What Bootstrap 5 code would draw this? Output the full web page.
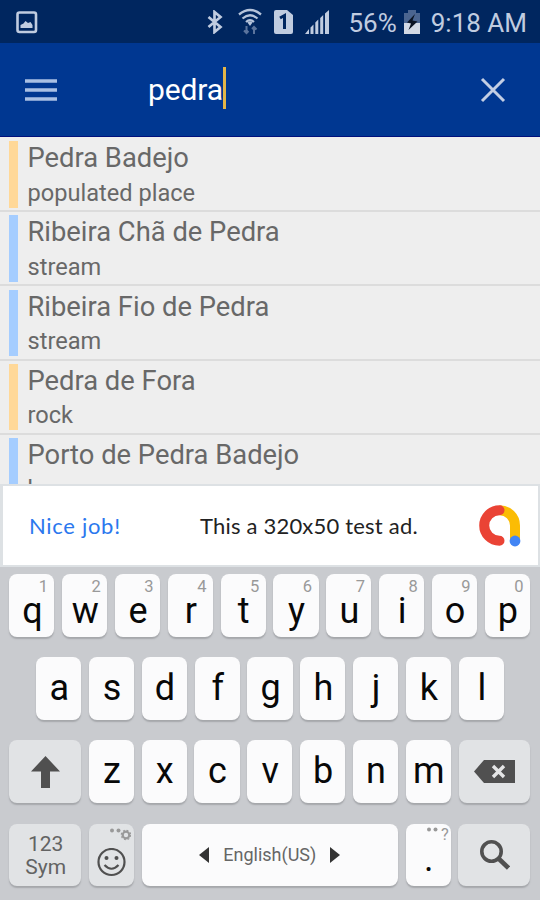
<!DOCTYPE html>
<html lang="en">
<head>
<meta charset="utf-8">
<meta name="viewport" content="width=device-width, initial-scale=1">
<title>Place search</title>
<link href="https://cdn.jsdelivr.net/npm/bootstrap@5.3.0/dist/css/bootstrap.min.css" rel="stylesheet">
<style>
  body { width: 540px; height: 900px; overflow: hidden; background: #eee; font-family: Roboto, "Liberation Sans", sans-serif; }
  svg { display: block; flex: none; }
  .status { height: 43px; background: #00265f; color: #c0cce0; font-size: 26px; padding: 3px 13px 0 16px; line-height: 40px; }
  .status svg { margin-top: -2px; }
  .searchbar { height: 94px; background: #003791; border-bottom: 1px solid #00107c; padding: 0 34px 0 25px; }
  .query { font-size: 30px; line-height: 42px; color: #fff; margin-left: 91px; padding-top: 1px; letter-spacing: -.1px; }
  .caret { width: 3px; height: 42px; background: #e3b548; margin-top: -3px; }
  .results { height: 347px; background: #eee; padding-top: 1px; }
  .place { height: 74.2px; padding: 3.3px 0 0 9.3px; border-bottom: 2px solid #dcdcdc; background: #eee; flex: none; }
  .place .stripe { width: 9px; height: 66.5px; margin-right: 9.2px; }
  .sand { background: #ffd898; }
  .sky { background: #a5cdff; }
  .place-name, .place-kind { line-height: 34.4px; color: #686868; white-space: nowrap; }
  .place-name { font-size: 27.35px; }
  .place-kind { font-size: 23.6px; }
  .ad { height: 83px; background: #fff; border: solid #dde1e4; border-width: 2px 2px 2px 3px; padding: 0 17.5px 0 26px; font-family: Lato, "Open Sans", sans-serif; font-size: 22px; letter-spacing: .2px; color: #222; }
  .ad-lead { color: #2b78ee; width: 171px; letter-spacing: .7px; }
  .keyboard { height: 333px; background: #c9cbcf; padding: 7px 9.3px 0; gap: 20.7px; }
  .keyrow { gap: 7.65px; height: 62.5px; }
  .key { width: 45.2px; height: 62.5px; border-radius: 8px; background: #fbfbfc; box-shadow: 0 2px 1.5px #a5a7ab; color: #080808; font-size: 36px; line-height: 62px; padding-left: 1px; text-align: center; position: relative; flex: none; }
  .key.low { line-height: 75px; }
  .key.wide { width: 71.8px; }
  .key.soft { background: #e1e3e5; color: #636363; }
  .key.space { width: 256.4px; color: #666; font-size: 18px; line-height: 62px; padding-left: 0; }
  .hint { position: absolute; right: 6.5px; top: 3px; font-size: 16.5px; line-height: 19px; color: #999; }
  .key.sym { font-size: 21px; line-height: 23px; padding-top: 9px; }
</style>
<script src="https://cdn.jsdelivr.net/npm/bootstrap@5.3.0/dist/js/bootstrap.bundle.min.js"></script>
</head>
<body class="d-flex flex-column">

<header class="status d-flex align-items-center flex-shrink-0">
  <svg width="22" height="23" viewBox="0 0 22 23"><rect x="1.5" y="1.5" width="18.5" height="19.5" rx="2" fill="none" stroke="#c0cce0" stroke-width="2.6"/><path d="M4.500 17v-3l3-1.500 2-2.500 2.500 2 2.500-1 2 3v3z" fill="#c0cce0"/></svg>
  <svg class="ms-auto" width="16" height="24" viewBox="0 0 16 24"><path d="M1.500 7l12 10-6 5V2l6 5-12 10" fill="none" stroke="#c0cce0" stroke-width="2.700"/></svg>
  <svg width="24" height="27" viewBox="0 0 24 27" style="margin:-4px 12px 0 15px"><g fill="none" stroke="#b6c4db" stroke-width="2.300"><path d="M1 6.500Q12-2.500 23 6.500M4.500 10.500Q12 4 19.500 10.500M8 14Q12 10.500 16 14"/></g><path d="M9.500 14.500Q12 12.500 14.500 14.500L12 18z" fill="#b6c4db"/><path d="M8.500 18v7m-2.500-2.500 2.500 2.500 2-2M16 26v-7m-2 2 2-2 2.500 2.500" fill="none" stroke="#5b749d" stroke-width="2"/></svg>
  <svg width="19" height="24" viewBox="0 0 19 24"><path d="M2 0h11l6 5v17q0 2-2 2H2q-2 0-2-2V2q0-2 2-2z" fill="#c0cce0"/><path d="M6 8l4.500-2.500V19" fill="none" stroke="#00265f" stroke-width="3"/></svg>
  <svg width="25" height="24" viewBox="0 0 25 24" style="margin:-2px 18px 0 12px"><path d="M0 24l4-5v5zM5.500 24v-6.500l3-3V24zM10.300 24V12.500l3-3V24zM15.200 24V8l3-3v19zM20 24V3.500L24 0v24z" fill="#c0cce0"/></svg>
  <span>56%</span>
  <svg width="16" height="24" viewBox="0 0 16 24" style="margin:-2px 11px 0 7px"><path d="M0 3h4V0h8v3h4v10H0z" fill="#4b6590"/><path d="M0 13h16v11H0z" fill="#d2d9e5"/><path d="M11 4L3 12.500l4 1L4.500 20 13.500 11.500l-5-1z" fill="#0b1424"/></svg>
  <span>9:18 AM</span>
</header>

<nav class="searchbar d-flex align-items-center flex-shrink-0">
  <svg width="32" height="24" viewBox="0 0 32 24"><path d="M0 3h32M0 12h32M0 21h32" stroke="#a9c0e4" stroke-width="3.600"/></svg>
  <span class="query">pedra</span><span class="caret"></span>
  <svg class="ms-auto" width="26" height="26" viewBox="0 0 26 26"><path d="M2 2l22 22M24 2L2 24" stroke="#c3cee4" stroke-width="3"/></svg>
</nav>

<main class="results d-flex flex-column overflow-hidden flex-shrink-0">
  <div class="place d-flex"><div class="stripe sand"></div><div><div class="place-name">Pedra Badejo</div><div class="place-kind">populated place</div></div></div>
  <div class="place d-flex"><div class="stripe sky"></div><div><div class="place-name">Ribeira Chã de Pedra</div><div class="place-kind">stream</div></div></div>
  <div class="place d-flex"><div class="stripe sky"></div><div><div class="place-name">Ribeira Fio de Pedra</div><div class="place-kind">stream</div></div></div>
  <div class="place d-flex"><div class="stripe sand"></div><div><div class="place-name">Pedra de Fora</div><div class="place-kind">rock</div></div></div>
  <div class="place d-flex"><div class="stripe sky"></div><div><div class="place-name">Porto de Pedra Badejo</div><div class="place-kind">bay</div></div></div>
</main>

<aside class="ad d-flex align-items-center flex-shrink-0">
  <span class="ad-lead">Nice job!</span><span>This a 320x50 test ad.</span>
  <svg class="ms-auto" width="42" height="42" viewBox="0 0 42 42"><path d="M20.500 5.200C29 5.200 36 12 36 20.500V36" fill="none" stroke="#fbbc04" stroke-width="10"/><path d="M20.500 5.200a15.300 15.300 0 0 0 0 30.600" fill="none" stroke="#ea4335" stroke-width="10" stroke-linecap="round"/><circle cx="36" cy="36" r="5.400" fill="#4285f4"/></svg>
</aside>

<section class="keyboard d-flex flex-column flex-shrink-0">
  <div class="keyrow d-flex">
    <div class="key low">q<span class="hint">1</span></div><div class="key low">w<span class="hint">2</span></div><div class="key low">e<span class="hint">3</span></div><div class="key low">r<span class="hint">4</span></div><div class="key low">t<span class="hint">5</span></div><div class="key low">y<span class="hint">6</span></div><div class="key low">u<span class="hint">7</span></div><div class="key low">i<span class="hint">8</span></div><div class="key low">o<span class="hint">9</span></div><div class="key low">p<span class="hint">0</span></div>
  </div>
  <div class="keyrow d-flex justify-content-center">
    <div class="key">a</div><div class="key">s</div><div class="key">d</div><div class="key">f</div><div class="key">g</div><div class="key">h</div><div class="key">j</div><div class="key">k</div><div class="key">l</div>
  </div>
  <div class="keyrow d-flex">
    <div class="key wide soft d-flex align-items-center justify-content-center"><svg width="29" height="32" viewBox="0 0 29 32"><path d="M14.500 0L29 15.500H19V32H10V15.500H0z" fill="#505050"/></svg></div>
    <div class="key">z</div><div class="key">x</div><div class="key">c</div><div class="key">v</div><div class="key">b</div><div class="key">n</div><div class="key">m</div>
    <div class="key wide soft d-flex align-items-center justify-content-center"><svg width="41" height="23" viewBox="0 0 41 23"><path d="M0 11.500L10 0h31v23H10z" fill="#505050"/><path d="M19 6l11 11M30 6L19 17" stroke="#e4e5e6" stroke-width="3.400"/></svg></div>
  </div>
  <div class="keyrow d-flex">
    <div class="key wide soft sym">123<br>Sym</div>
    <div class="key soft d-flex justify-content-center align-items-end pb-2">
      <svg width="29" height="30" viewBox="0 0 29 30"><circle cx="14.500" cy="14" r="13" fill="none" stroke="#505050" stroke-width="2.200"/><circle cx="9.500" cy="10" r="2" fill="#505050"/><circle cx="19.500" cy="10" r="2" fill="#505050"/><path d="M7.500 17q7 7.500 14 0" fill="none" stroke="#505050" stroke-width="2.200"/></svg>
      <svg class="position-absolute top-0" style="right:3px;margin-top:4px" width="21" height="13" viewBox="0 0 21 13"><circle cx="2" cy="2.500" r="2" fill="#999"/><circle cx="8.500" cy="2.500" r="2" fill="#999"/><circle cx="16" cy="7" r="3.300" fill="none" stroke="#999" stroke-width="2.200"/><circle cx="16" cy="7" r="4.700" fill="none" stroke="#999" stroke-width="1.200" stroke-dasharray="1.850 1.850"/></svg>
    </div>
    <div class="key space d-flex align-items-center justify-content-center">
      <svg width="10" height="16" viewBox="0 0 10 16"><path d="M10 0v16L0 8z" fill="#333"/></svg>
      <span style="margin:0 14px">English(US)</span>
      <svg width="10" height="16" viewBox="0 0 10 16"><path d="M0 0v16l10-8z" fill="#333"/></svg>
    </div>
    <div class="key low" style="line-height:71px">.<svg class="position-absolute top-0" style="right:13px;margin-top:3px" width="11" height="5" viewBox="0 0 11 5"><circle cx="2" cy="2.500" r="2" fill="#999"/><circle cx="8.500" cy="2.500" r="2" fill="#999"/></svg><span class="hint" style="right:2px;top:1px">?</span></div>
    <div class="key wide soft d-flex align-items-center justify-content-center"><svg width="30" height="30" viewBox="0 0 30 30"><circle cx="11.500" cy="11.500" r="9.700" fill="none" stroke="#505050" stroke-width="3.600"/><path d="M18.500 18.500L28.500 28" stroke="#505050" stroke-width="4.600"/></svg></div>
  </div>
</section>
</body>
</html>
